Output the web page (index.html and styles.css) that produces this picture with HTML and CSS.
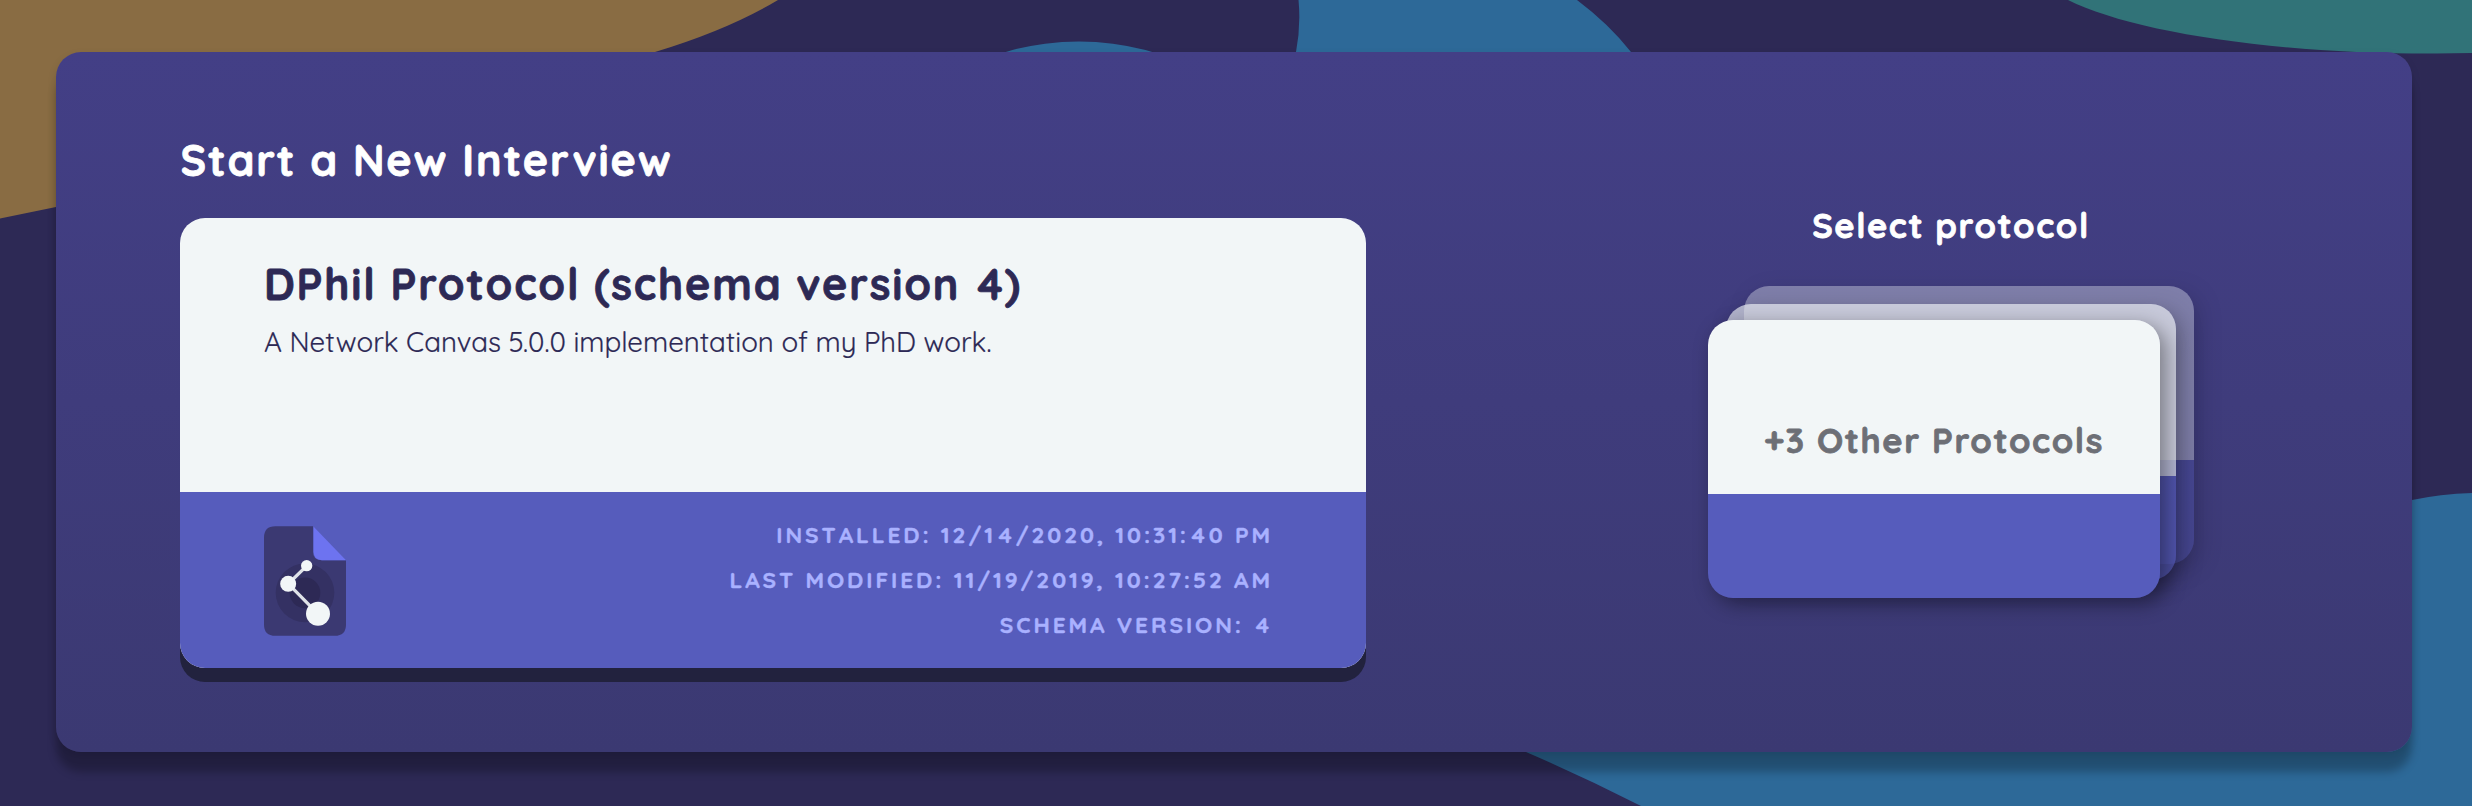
FILE: index.html
```html
<!DOCTYPE html>
<html lang="en">
<head>
<meta charset="utf-8">
<title>Start a New Interview</title>
<link rel="stylesheet" href="styles.css">
</head>
<body>
<svg class="backdrop" viewBox="0 0 2472 806" aria-hidden="true">
  <path fill="#896c43" d="M0 0H778Q728 30 655 52Q400 140 56 207L0 218.500Z"/>
  <ellipse fill="#2d6998" cx="1079" cy="153" rx="174" ry="111.500"/>
  <path fill="#2d6998" d="M1298.500 0Q1301 26 1296 52V100H1652L1631 52Q1609 24 1577 0Z"/>
  <path fill="#317378" d="M2068 0C2130 31 2270 54 2436 53.600L2472 53V0Z"/>
  <path fill="#2d6998" d="M1490 730L1526 752Q1584 777 1641 806H2472V493Q2440 494 2412 500L2300 540V730Z"/>
</svg>
<main class="panel">
  <section class="start">
    <h1 class="heading">Start a New Interview</h1>
    <article class="card">
      <div class="card-body">
        <h2 class="card-title">DPhil Protocol (schema version <span class="version">4)</span></h2>
        <p class="card-text">A Network Canvas 5.0.0 implementation of my PhD work.</p>
      </div>
      <footer class="card-footer">
        <svg class="icon" viewBox="0 0 246 329" aria-hidden="true">
          <path fill="#3b3972" d="M34 0H147V77Q147 102 172 102H246V295Q246 329 212 329H34Q0 329 0 295V34Q0 0 34 0Z"/>
          <path fill="#6d73f0" d="M149 2L246 102H174Q149 102 149 77Z"/>
          <circle fill="#343163" cx="123" cy="200" r="88"/>
          <circle fill="#2d2955" cx="123" cy="200" r="46"/>
          <path fill="none" stroke="#dfe2e8" stroke-width="10" d="M128 119L73 173L162 263"/>
          <circle fill="#f2f6f7" cx="128" cy="118.500" r="17"/>
          <circle fill="#f2f6f7" cx="72.500" cy="173" r="24"/>
          <circle fill="#f2f6f7" cx="162" cy="263" r="36"/>
        </svg>
        <div class="meta">
          <span class="installed">Installed: 12/1<b class="four">4</b>/2020, 10:31:<b class="four">4</b>0 PM</span>
          <span class="modified">Last modified: 11/19/2019, 10:27:52 AM</span>
          <span class="schema">Schema version: <b class="four">4</b></span>
        </div>
      </footer>
    </article>
  </section>
  <section class="select">
    <h3 class="select-title">Select protocol</h3>
    <div class="stack">
      <div class="sheet sheet-back"></div>
      <div class="sheet sheet-middle"></div>
      <div class="sheet sheet-front"><span class="others">+3 Other Protocols</span></div>
    </div>
  </section>
</main>
</body>
</html>
```
FILE: styles.css
```css
* { box-sizing: border-box; }
body {
  margin: 0;
  height: 806px;
  overflow: hidden;
  padding: 52px 60px 54px 56px;
  background: #2d2955;
  font-family: Quicksand, Lato, sans-serif;
  color: #fff;
}
h1, h2, h3, p { margin: 0; white-space: nowrap; }
.heading, .card-title, .select-title, .others { -webkit-text-stroke: .8px currentColor; }
.backdrop { position: absolute; left: 0; top: 0; width: 2472px; height: 806px; z-index: -1; }
.panel {
  display: flex;
  justify-content: space-between;
  height: 700px;
  padding: 78px 218px 0 124px;
  border-radius: 25px;
  background: linear-gradient(#433f86, #3b3972);
  box-shadow: 0 20px 8px rgba(0, 0, 0, .25), 0 4px 10px rgba(0, 0, 0, .1);
}
.start { width: 1186px; }
.heading { height: 88px; line-height: 60px; font-size: 43px; font-weight: 700; letter-spacing: 1.850px; text-indent: .5px; }
.card {
  height: 450px;
  border-radius: 25px;
  overflow: hidden;
  box-shadow: 0 14px 0 #22223e;
  background: #f2f6f7;
  color: #2d2955;
}
.card-body { height: 274px; padding: 36px 84px 0; }
.card-title { line-height: 60px; font-size: 43px; font-weight: 700; letter-spacing: 1.800px; }
.version { margin-left: 3.500px; }
.card-text { margin-top: 8px; line-height: 40px; font-size: 27.650px; -webkit-text-stroke: .2px currentColor; }
.card-footer {
  display: flex;
  justify-content: space-between;
  height: 176px;
  padding: 34px 93px 0 84px;
  background: #565cbc;
}
.icon { width: 82px; height: 110px; }
.meta {
  display: flex;
  flex-direction: column;
  align-items: flex-end;
  margin-top: -14px;
  line-height: 45px;
  font-size: 22.700px;
  font-weight: 700;
  font-kerning: none;
  letter-spacing: 2.920px;
  text-transform: uppercase;
  color: #a9b1ff;
  -webkit-text-stroke: .4px currentColor;
}
.meta span { white-space: nowrap; }
.four { font-weight: inherit; margin: 0 1px 0 2.500px; }
.select { width: 486px; margin-top: 70px; }
.select-title { height: 86px; line-height: 50px; text-align: center; font-size: 34.500px; font-weight: 700; letter-spacing: 1.600px; }
.stack { position: relative; height: 312px; }
.sheet {
  position: absolute;
  width: 450px;
  height: 278px;
  border-radius: 25px;
  background: linear-gradient(#f2f6f7 174px, #565cbc 174px);
  box-shadow: 6px 6px 20px rgba(0, 0, 0, .4);
}
.sheet-back { left: 36px; top: 0; opacity: .35; }
.sheet-middle { left: 18px; top: 18px; opacity: .63; height: 276px; background: linear-gradient(#f2f6f7 172px, #565cbc 172px); }
.sheet-front { left: 0; top: 34px; width: 452px; height: 278px; display: flex; justify-content: center; padding-top: 95px; }
.others { line-height: 50px; white-space: nowrap; font-size: 34.500px; font-weight: 700; letter-spacing: 1.600px; color: #6d6f76; }
```
